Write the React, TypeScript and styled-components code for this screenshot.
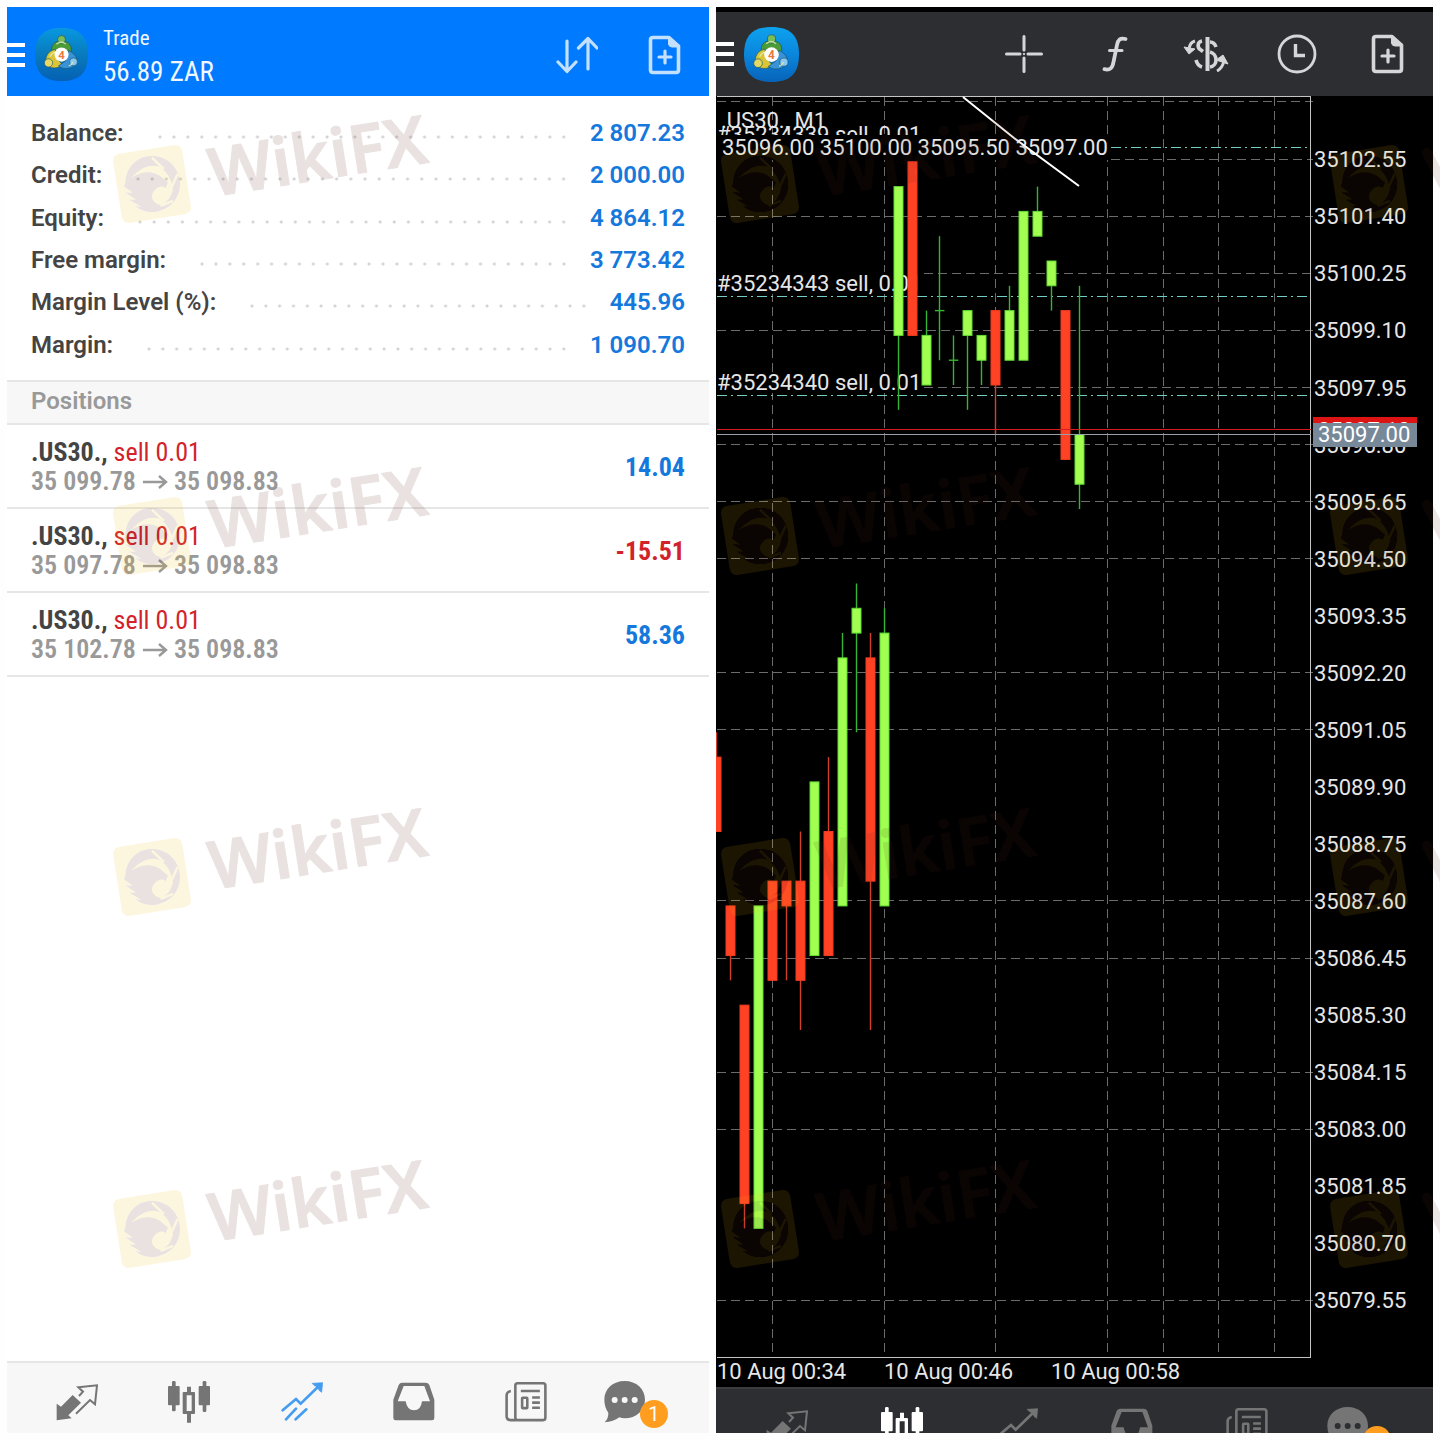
import React from "react";
import styled, { createGlobalStyle } from "styled-components";

const GlobalStyle = createGlobalStyle`
  *, *::before, *::after { box-sizing: border-box; }
  body {
    margin: 0;
    background: #fefefe;
    font-family: Roboto, "Noto Sans", sans-serif;
  }
`;

const condensed = `"Roboto Condensed", Roboto, sans-serif`;

/* ---------- shell ---------- */

const Page = styled.main`
  position: relative;
  display: grid;
  grid-template-columns: 702fr 717fr;
  gap: 7px;
  height: 100vh;
  padding: 7px;
  overflow: hidden;
`;

const Screen = styled.section<{ $dark?: boolean }>`
  display: flex;
  flex-direction: column;
  min-width: 0;
  min-height: 0;
  overflow: hidden;
  background: ${(p) => (p.$dark ? "#000" : "#fff")};
  padding-top: ${(p) => (p.$dark ? "5px" : "0")};
`;

const Bar = styled.header<{ $dark?: boolean }>`
  display: flex;
  flex: none;
  align-items: center;
  height: ${(p) => (p.$dark ? "84px" : "89px")};
  padding-top: ${(p) => (p.$dark ? "0" : "6px")};
  background: ${(p) => (p.$dark ? "#2d2e32" : "#007aff")};
  color: ${(p) => (p.$dark ? "#d6d6d8" : "#c4e0ff")};
`;

const IconButton = styled.button<{ $width?: number }>`
  display: flex;
  flex: none;
  align-items: center;
  justify-content: center;
  width: ${(p) => (p.$width ? `${p.$width}px` : "auto")};
  height: 48px;
  padding: 0;
  border: 0;
  background: none;
  color: inherit;
`;

const MenuButton = styled(IconButton)`
  display: grid;
  align-content: center;
  gap: 6px;
  width: 18px;
`;

const MenuLine = styled.span`
  width: 18px;
  height: 4px;
  background: #fff;
`;

const Logo = styled.svg<{ $size: number }>`
  flex: none;
  width: ${(p) => p.$size}px;
  height: ${(p) => p.$size}px;
  margin: 0 15px 0 10px;
`;

const Titles = styled.div`
  flex: 1;
  padding-top: 3px;
  color: #f0f7ff;
  font-family: ${condensed};
`;

const Title = styled.h1`
  margin: 0;
  font-size: 21px;
  line-height: 32px;
  font-weight: 400;
`;

const Profit = styled.p`
  margin: 0;
  font-size: 27px;
  line-height: 36px;
`;

const Spacer = styled.div`
  flex: 1;
`;

/* ---------- account summary ---------- */

const Summary = styled.dl`
  display: grid;
  grid-template-rows: repeat(6, 1fr);
  height: 284px;
  margin: 0;
  padding: 16px 24px 14px;
`;

const SummaryRow = styled.div`
  display: flex;
  align-items: center;
  font-size: 24px;
  font-weight: 600;
`;

const Label = styled.dt`
  color: #444;
`;

const Leader = styled.span`
  flex: 1;
  height: 4px;
  margin: 8px 16px 0 32px;
  background: radial-gradient(circle at 4px 2px, #d4d4d4 1px, transparent 2px) 0 0 / 14px 4px round;
`;

const Value = styled.dd`
  margin: 0;
  color: #1478dc;
`;

/* ---------- positions ---------- */

const SectionTitle = styled.h2`
  margin: 0;
  padding: 0 24px 3px;
  border: solid #e6e6e6;
  border-width: 2px 0;
  background: #f7f7f7;
  color: #999;
  font-size: 24px;
  line-height: 38px;
  font-weight: 600;
`;

const Positions = styled.ul`
  flex: 1;
  margin: 0;
  padding: 0;
  list-style: none;
`;

const Position = styled.li`
  display: flex;
  align-items: center;
  justify-content: space-between;
  height: 84px;
  padding: 2px 24px 0;
  border-bottom: 2px solid #e6e6e6;
  font-family: ${condensed};
  font-size: 26px;
  line-height: 29px;
`;

const Symbol = styled.strong`
  color: #444;
  font-weight: 700;
`;

const Side = styled.span`
  color: #d2232a;
`;

const Prices = styled.div`
  display: flex;
  align-items: center;
  gap: 6px;
  color: #999;
  font-weight: 600;
`;

const Result = styled.span<{ $loss?: boolean }>`
  color: ${(p) => (p.$loss ? "#d2232a" : "#1478dc")};
  font-weight: 700;
`;

/* ---------- bottom navigation ---------- */

const Nav = styled.nav<{ $dark?: boolean }>`
  display: grid;
  flex: none;
  grid-template-columns: repeat(6, 1fr);
  height: 72px;
  padding: 0 14px;
  border-top: 2px solid ${(p) => (p.$dark ? "#3c3c3e" : "#e6e6e6")};
  background: ${(p) => (p.$dark ? "#2d2e32" : "#f7f7f7")};
  color: #757575;
`;

const Tab = styled.button<{ $color?: string }>`
  display: flex;
  align-items: flex-start;
  justify-content: center;
  padding: 18px 0 0;
  border: 0;
  background: none;
  color: ${(p) => p.$color ?? "inherit"};

  &:last-child {
    padding-right: 6px;
  }
`;

const TabSvg = styled.svg`
  flex: none;
  width: 42px;
  height: 42px;
`;

const Badge = styled.span`
  width: 28px;
  height: 28px;
  margin: 19px 0 0 -6px;
  border-radius: 50%;
  background: #ff9d1e;
  color: #fff;
  font: 400 20px/28px Roboto, sans-serif;
  text-align: center;
`;

const ChartSvg = styled.svg`
  display: block;
  flex: none;
  width: 100%;
  font-family: Roboto, sans-serif;
  font-size: 22px;
`;

const WatermarkLayer = styled.svg`
  position: absolute;
  inset: 0;
  width: 100%;
  height: 100%;
  pointer-events: none;
  font-family: "Noto Sans", "Open Sans", sans-serif;
`;

/* ---------- icons ---------- */

function AppLogo({ size, id, dim }: { size: number; id: string; dim?: boolean }) {
  return (
    <Logo $size={size} viewBox="0 0 54 54" aria-hidden="true">
      <defs>
        <linearGradient id={id} x1="0" y1="0" x2="0" y2="1">
          <stop offset="0" stopColor={dim ? "#0898e0" : "#0da2ee"} />
          <stop offset="0.5" stopColor={dim ? "#087bbd" : "#0a86dc"} />
          <stop offset="1" stopColor={dim ? "#0560b4" : "#0763b8"} />
        </linearGradient>
      </defs>
      <path d="M27 0C45 0 54 8 54 27S45 54 27 54 0 46 0 27 9 0 27 0Z" fill={`url(#${id})`} />
      <g transform="translate(-1.600 -2.600) scale(1.060)">
        <g stroke="#18506b" strokeWidth="0.6">
          <path d="M18 27C16 19 20 15 27 15S38 19 36 27L31 23H23Z" fill="#4b9b38" />
          <circle cx="27" cy="13.500" r="3.8" fill="#79bd54" />
          <path d="M21 23C14 24 11 30 12 37 16 42 23 42 28 38L22 31Z" fill="#d9c536" />
          <circle cx="14.5" cy="36" r="4" fill="#e6d964" />
          <path d="M34 24C41 28 43 32 41 37 37 42 29 43 24 39L31 34Z" fill="#3a93d6" />
          <circle cx="38.5" cy="35" r="3.8" fill="#8bc9f1" />
        </g>
        <path d="M22 18Q27 14 31 18M16 30Q18 26 21 26M34 39Q37 38 38 35" fill="none" stroke="#e4f4c0" strokeWidth="1.2" opacity="0.8" />
        <circle cx="27" cy="28" r="6.8" fill="#fff" />
        <text x="27" y="32" textAnchor="middle" fontSize="11" fontWeight="700" fill="#e87a3c">4</text>
      </g>
    </Logo>
  );
}

const NewOrderIcon = () => (
  <svg width="34" height="40" viewBox="0 0 34 40" fill="none" stroke="currentColor" aria-hidden="true">
    <path d="M5 2.5H21L30.500 11V35Q30.500 37.500 28 37.500H5Q2.500 37.500 2.500 35V5Q2.500 2.500 5 2.500Z" strokeWidth="3.600" strokeLinejoin="round" />
    <path d="M20.500 3V9Q21 12 24 12H30L21.500 3Z" fill="currentColor" strokeWidth="1" />
    <path d="M17 16V28M11 22H23" strokeWidth="3.200" strokeLinecap="round" />
  </svg>
);

const SortIcon = () => (
  <svg width="42" height="38" viewBox="0 0 42 38" fill="none" stroke="currentColor" strokeWidth="3.2" strokeLinecap="round" strokeLinejoin="round" aria-hidden="true">
    <path d="M11 5V35M2 26L11 35.500L20 26M32 33V3M22.500 12L32 2.500L41 12" />
  </svg>
);

const CrosshairIcon = () => (
  <svg width="38" height="38" viewBox="0 0 38 38" stroke="currentColor" strokeWidth="3" strokeLinecap="round" aria-hidden="true">
    <path d="M19 1.500V15M19 23V36.500M1.500 19H15M23 19H36.500" />
    <rect x="18.200" y="18.200" width="1.600" height="1.600" strokeWidth="0.500" fill="currentColor" />
  </svg>
);

const FunctionIcon = () => (
  <svg width="26" height="36" viewBox="0 0 26 36" fill="none" stroke="currentColor" strokeLinecap="round" aria-hidden="true">
    <path d="M23.500 3C18 1.500 16 4 15 9L11.500 26C10.500 32 8 34.500 2.500 33.200" strokeWidth="3.800" />
    <path d="M7.500 14.500H20" strokeWidth="3" />
  </svg>
);

const TradeIcon = () => (
  <svg width="46" height="36" viewBox="0 0 46 36" fill="none" stroke="currentColor" aria-hidden="true">
    <path d="M24.500 1V35" strokeWidth="4" />
    <path d="M19 5C14 6 14 12 18 14L20 15.500M13 24C14 28 16 30 19 31M27 6C30 6 32 8 33 11M27 16C35 18 35 30 27 31" strokeWidth="3.600" />
    <path d="M12 5C8 6 6.500 9 6 13M34 35C38 33 40 29 41 25" strokeWidth="3" />
    <path d="M1 11L6 18L12 13ZM33 24L40 19L45 28Z" fill="currentColor" strokeWidth="1" />
  </svg>
);

const ClockIcon = () => (
  <svg width="40" height="40" viewBox="0 0 40 40" fill="none" stroke="currentColor" aria-hidden="true">
    <circle cx="20" cy="20" r="18" strokeWidth="2.800" />
    <path d="M18.500 10V21.500H28" strokeWidth="3.400" />
  </svg>
);

const QuotesGlyph = () => (
  <TabSvg viewBox="0 0 126 126" aria-hidden="true">
    <path d="M2 68V118L47 112L37 103L75 65L50 42L15 77Z" fill="currentColor" />
    <path d="M60 98L102 57L117 70L123 13L67 19L81 32L69 45" fill="none" stroke="currentColor" strokeWidth="6" />
  </TabSvg>
);

const ChartsGlyph = () => (
  <TabSvg viewBox="0 0 126 126" fill="currentColor" aria-hidden="true">
    <rect x="0" y="15" width="35" height="58" rx="3" />
    <rect x="12" y="0" width="11" height="91" rx="4" />
    <path fillRule="evenodd" d="M47 33H57V17H69V33H78Q81 33 81 36V96Q81 99 78 99H69V125H57V99H47Q44 99 44 96V36Q44 33 47 33ZM56 43V90H71V43Z" />
    <rect x="92" y="15" width="34" height="58" rx="3" />
    <rect x="104" y="0" width="11" height="93" rx="4" />
  </TabSvg>
);

const TradeGlyph = () => (
  <TabSvg viewBox="0 0 126 126" fill="none" stroke="currentColor" strokeWidth="8" strokeLinecap="round" aria-hidden="true">
    <path d="M5 88L45 54L59 68L116 13M15 115L45 83M44 115L76 85" />
    <path d="M94 7L125 5L122 34L114 28L110 18L101 14Z" fill="currentColor" strokeWidth="2" />
  </TabSvg>
);

const HistoryGlyph = () => (
  <TabSvg viewBox="0 0 126 126" fill="currentColor" aria-hidden="true">
    <path fillRule="evenodd" d="M28 5H98Q106 5 109 12L124 56V111Q124 118 117 118H8Q1 118 1 111V56L17 12Q20 5 28 5ZM32 15L14 61H38Q42 88 63 88Q84 88 87 61H111L94 15Z" />
  </TabSvg>
);

const NewsGlyph = () => (
  <TabSvg viewBox="0 0 130 126" fill="none" stroke="currentColor" strokeWidth="8" aria-hidden="true">
    <rect x="32" y="5" width="93" height="114" rx="7" />
    <path d="M18 29Q5 32 5 42V107Q5 119 17 119H36M49 29H108M84 49H108M84 65H108M84 81H108" />
    <rect x="53" y="50" width="16" height="32" rx="2" />
  </TabSvg>
);

const MailGlyph = ({ hole }: { hole: string }) => (
  <TabSvg viewBox="0 0 126 126" fill="currentColor" aria-hidden="true">
    <path d="M62 0C97 0 123 24 123 56S97 112 62 112Q53 112 46 109Q28 122 2 124Q14 112 13 95Q1 78 1 56C1 24 27 0 62 0Z" />
    <g fill={hole}>
      <circle cx="32" cy="57" r="9" />
      <circle cx="62" cy="57" r="9" />
      <circle cx="92" cy="57" r="9" />
    </g>
  </TabSvg>
);

const Arrow = () => (
  <svg width="26" height="16" viewBox="0 0 26 16" fill="none" stroke="currentColor" strokeWidth="2.400" aria-label="to" role="img">
    <path d="M1 8H24M17 2L24 8L17 14" />
  </svg>
);

function BottomNav({ dark }: { dark?: boolean }) {
  return (
    <Nav $dark={dark}>
      <Tab type="button" aria-label="Quotes"><QuotesGlyph /></Tab>
      <Tab type="button" aria-label="Charts" $color={dark ? "#fff" : undefined}><ChartsGlyph /></Tab>
      <Tab type="button" aria-label="Trade" $color={dark ? undefined : "#459cf0"}><TradeGlyph /></Tab>
      <Tab type="button" aria-label="History"><HistoryGlyph /></Tab>
      <Tab type="button" aria-label="News"><NewsGlyph /></Tab>
      <Tab type="button" aria-label="Messages">
        <MailGlyph hole={dark ? "#2d2e32" : "#f7f7f7"} />
        <Badge>{dark ? null : "1"}</Badge>
      </Tab>
    </Nav>
  );
}

/* ---------- chart ---------- */

const TOP_PRICE = 35102.55;
const priceY = (p: number) => 63.3 + (TOP_PRICE - p) * 49.61;
const barX = (i: number) => 0.4 + i * 13.94;
const crisp = (n: number) => Math.floor(n) + 0.5;

// open, high, low, close; each is an offset from 35000
const candles: [number, number, number, number][] = [
  [90.5, 91, 89, 89],
  [87.5, 87.5, 86, 86.5],
  [85.5, 85.5, 81, 81.5],
  [81, 87.5, 81, 87.5],
  [88, 88, 86, 86],
  [88, 88, 86, 87.5],
  [88, 89, 85, 86],
  [86.5, 90, 86.5, 90],
  [89, 90.5, 86.5, 86.5],
  [87.5, 93, 87.5, 92.5],
  [93, 94, 91, 93.5],
  [92.5, 93, 85, 88],
  [87.5, 93.5, 87.5, 93],
  [99, 102, 97.5, 102],
  [102.5, 102.5, 99, 99],
  [98, 99.5, 98, 99],
  [99.5, 101, 98.5, 99.5],
  [98.5, 99, 98, 98.5],
  [99, 99.5, 97.5, 99.5],
  [98.5, 99, 98, 99],
  [99.5, 99.5, 97, 98],
  [98.5, 100, 98.5, 99.5],
  [98.5, 101.5, 98.5, 101.5],
  [101, 102, 101, 101.5],
  [100, 100.5, 99.5, 100.5],
  [99.5, 99.5, 96.5, 96.5],
  [96, 100, 95.5, 97],
];

const priceLabels = Array.from({ length: 21 }, (_, i) => TOP_PRICE - i * 1.15);
const gridRows = [1, 2, 3, 4, 5, 6, 7, 9, 10, 13, 14, 16, 17, 20];
const gridColumns = [56, 168, 279, 391, 447, 502, 558];

function Candle({ index, data }: { index: number; data: [number, number, number, number] }) {
  const [open, high, low, close] = data.map((v) => priceY(35000 + v));
  const x = barX(index);
  const center = Math.round(x) + 0.5;
  const up = close <= open;
  const top = Math.min(open, close);
  const height = Math.abs(open - close);
  return (
    <g>
      <line x1={center} x2={center} y1={high} y2={low} stroke={up ? "#35b535" : "#d2402c"} strokeWidth="1.4" />
      {height < 1 ? (
        <line x1={x - 4.5} x2={x + 5} y1={top} y2={top} stroke="#35b535" strokeWidth="1.4" />
      ) : (
        <rect x={center - 4.5} y={top} width="9" height={height} fill={up ? "#a2ff52" : "#ff4124"} stroke={up ? "#5fdc33" : "#f03c20"} strokeWidth="1" />
      )}
    </g>
  );
}

function Chart() {
  return (
    <ChartSvg viewBox="0 0 717 1291" role="img" aria-label="US30 one minute chart">
      <g stroke="#6c6c6c" strokeWidth="1" strokeDasharray="9 5">
        <line x1="1" x2="597" y1="5.500" y2="5.500" />
        <line x1="395" x2="597" y1="63.500" y2="63.500" />
        {gridRows.map((i) => {
          const y = crisp(priceY(TOP_PRICE - i * 1.15));
          const afterLabel = i === 2 || i === 4;
          return <line key={i} x1={afterLabel ? 208 : 1} x2="597" y1={y} y2={y} />;
        })}
        {gridColumns.map((x) => (
          <line key={x} x1={x + 0.5} x2={x + 0.5} y1="1" y2="1261" />
        ))}
      </g>
      <path d="M395 51.500H592M1 200.500H592M1 299.500H592" stroke="#6fcfc4" strokeDasharray="10 4 2 4" fill="none" />
      <path d="M1 0.500H595M594.500 0.500V1261M1 1261.500H595" stroke="#c4c4c4" fill="none" />

      <g fill="#e6e6e6">
        <text x="5" y="32">.US30., M1</text>
        <text x="1" y="46">#35234339 sell, 0.01</text>
        <rect x="1" y="39" width="394" height="25" fill="#000" />
        <text x="6" y="59">35096.00 35100.00 35095.50 35097.00</text>
        <rect x="1" y="176" width="204" height="22" fill="#000" />
        <rect x="1" y="276" width="204" height="21" fill="#000" />
        <text x="1" y="195">#35234343 sell, 0.01</text>
        <text x="1" y="294">#35234340 sell, 0.01</text>
      </g>

      {candles.map((c, i) => (
        <Candle key={i} index={i} data={c} />
      ))}
      <path d="M1 333.500H595" stroke="#d81c1c" />
      <path d="M1 338.500H595" stroke="#97a0a8" />
      <path d="M247 1L298 42L363 90" stroke="#fff" strokeWidth="2" fill="none" />

      <g fill="#e6e6e6">
        {priceLabels.map((p) => (
          <text key={p} x="598" y={Math.round(priceY(p)) + 8}>{p.toFixed(2)}</text>
        ))}
        <text x="1" y="1283">10 Aug 00:34</text>
        <text x="168" y="1283">10 Aug 00:46</text>
        <text x="335" y="1283">10 Aug 00:58</text>
      </g>
      <rect x="597" y="321" width="104" height="24" fill="#dc1414" />
      <text x="602" y="342" fill="#fff">35097.10</text>
      <rect x="597" y="327" width="104" height="24" fill="#778899" />
      <text x="602" y="346" fill="#fff">35097.00</text>
    </ChartSvg>
  );
}

/* ---------- watermark ---------- */

const markTops = [184, 536, 877, 1229];
const marks = [
  { x: 152, opacity: 0.13, named: true },
  { x: 760, opacity: 0.11, named: true },
  { x: 1369, opacity: 0.11, named: false },
];

function Watermarks() {
  return (
    <WatermarkLayer aria-hidden="true">
      {markTops.map((y) =>
        marks.map(({ x, opacity, named }) => (
          <g key={`${x}-${y}`} transform={`translate(${x} ${y}) rotate(-9)`} opacity={opacity}>
            <path
              fillRule="evenodd"
              fill="#f5be14"
              d="M-27 -35H27Q35 -35 35 -27V27Q35 35 27 35H-27Q-35 35 -35 27V-27Q-35 -35 -27 -35ZM-26 -6C-23 -20 -12 -28 0 -28C16 -28 28 -16 28 0S16 28 0 28C-8 28 -15 25 -20 19L-14 21L-25 12L-18 13L-28 4L-20 6L-28 -2Z"
            />
            <path
              fill="#5a281e"
              d="M-26 -6C-23 -20 -12 -28 0 -28C16 -28 28 -16 28 0S16 28 0 28C-8 28 -15 25 -20 19L-14 21L-25 12L-18 13L-28 4L-20 6L-28 -2Z"
            />
            <path
              fill="#f5be14"
              d="M-20 -9C-8 -15 2 -13 9 -7L16 1L13 6C8 2 4 4 0 8C-4 13 -2 19 5 22C12 21 17 16 20 8C20 -1 17 -10 10 -16C2 -20 -8 -19 -20 -9Z"
            />
            <path fill="#5a281e" d="M-24 -4C-14 -12 -1 -13 8 -7L14 0L12 4C4 0 -2 4 -6 12L-8 20L-18 15Z" />
            <path d="M4 -26L14 -13M27 -6L19 6M18 20L5 23" stroke="#f5be14" strokeWidth="2.500" />
            {named ? (
              <text x="58" y="22" fontSize="67" fontWeight="600" fill="#5a281e" stroke="#5a281e" strokeWidth="1" strokeLinejoin="round">
                WikiFX
              </text>
            ) : (
              <path d="M62 -22L76 20" stroke="#5a281e" strokeWidth="10" strokeLinecap="round" />
            )}
          </g>
        ))
      )}
    </WatermarkLayer>
  );
}

/* ---------- page ---------- */

const summary = [
  ["Balance:", "2 807.23"],
  ["Credit:", "2 000.00"],
  ["Equity:", "4 864.12"],
  ["Free margin:", "3 773.42"],
  ["Margin Level (%):", "445.96"],
  ["Margin:", "1 090.70"],
];

const positions = [
  { open: "35 099.78", now: "35 098.83", result: "14.04" },
  { open: "35 097.78", now: "35 098.83", result: "-15.51" },
  { open: "35 102.78", now: "35 098.83", result: "58.36" },
];

const Menu = () => (
  <MenuButton type="button" aria-label="Menu">
    <MenuLine />
    <MenuLine />
    <MenuLine />
  </MenuButton>
);

export default function App() {
  return (
    <>
      <GlobalStyle />
      <Page>
        <Screen>
          <Bar>
            <Menu />
            <AppLogo size={53} id="logoTrade" dim />
            <Titles>
              <Title>Trade</Title>
              <Profit>56.89 ZAR</Profit>
            </Titles>
            <IconButton type="button" $width={88} aria-label="Sort"><SortIcon /></IconButton>
            <IconButton type="button" $width={88} aria-label="New order"><NewOrderIcon /></IconButton>
          </Bar>
          <Summary>
            {summary.map(([label, value]) => (
              <SummaryRow key={label}>
                <Label>{label}</Label>
                <Leader />
                <Value>{value}</Value>
              </SummaryRow>
            ))}
          </Summary>
          <SectionTitle>Positions</SectionTitle>
          <Positions>
            {positions.map((p) => (
              <Position key={p.open}>
                <div>
                  <Symbol>.US30.,</Symbol> <Side>sell 0.01</Side>
                  <Prices>
                    {p.open}
                    <Arrow />
                    {p.now}
                  </Prices>
                </div>
                <Result $loss={p.result.startsWith("-")}>{p.result}</Result>
              </Position>
            ))}
          </Positions>
          <BottomNav />
        </Screen>

        <Screen $dark>
          <Bar $dark>
            <Menu />
            <AppLogo size={55} id="logoChart" />
            <Spacer />
            <IconButton type="button" $width={91} aria-label="Crosshair"><CrosshairIcon /></IconButton>
            <IconButton type="button" $width={91} aria-label="Indicators"><FunctionIcon /></IconButton>
            <IconButton type="button" $width={91} aria-label="Trade"><TradeIcon /></IconButton>
            <IconButton type="button" $width={91} aria-label="Period"><ClockIcon /></IconButton>
            <IconButton type="button" $width={91} aria-label="New order"><NewOrderIcon /></IconButton>
          </Bar>
          <Chart />
          <BottomNav dark />
        </Screen>
        <Watermarks />
      </Page>
    </>
  );
}
